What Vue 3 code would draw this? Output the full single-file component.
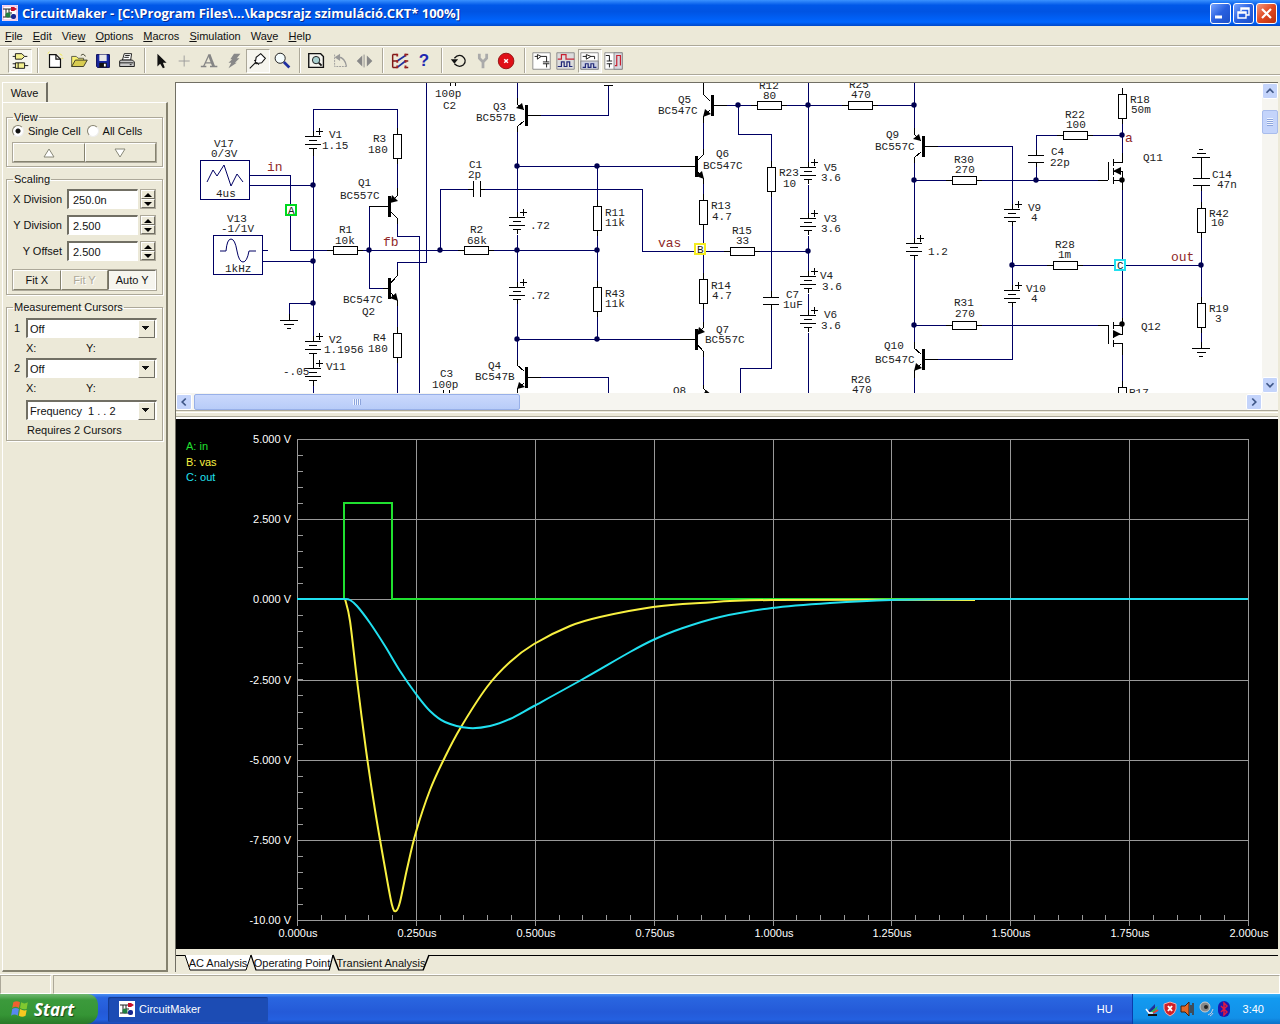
<script setup>
import { ref } from 'vue'

const menus = ['File', 'Edit', 'View', 'Options', 'Macros', 'Simulation', 'Wave', 'Help']
const hot = { File: 0, Edit: 0, View: 3, Options: 0, Macros: 0, Simulation: 0, Wave: 2, Help: 0 }

const view = ref('single')
const scaling = ref([
  { id: 'xdiv', label: 'X Division', value: '250.0n' },
  { id: 'ydiv', label: 'Y Division', value: '2.500' },
  { id: 'yoff', label: 'Y Offset', value: '2.500' },
])

/* schematic: symbols are placed on the drawing sheet */
const wires = [
  'M313 131V109H397V134', 'M313 152V336', 'M313 358V363', 'M313 385V395', 'M249 175H290V250H333', 'M249 185H313',
  'M262 250H268', 'M262 261H313', 'M313 303H289V315', 'M397 163V190', 'M369 206V288H383M369 206H383',
  'M397 223V236H419V395', 'M397 271V262H426V80', 'M397 305V328', 'M397 362V395', 'M357 250H464M488 250H597',
  'M440 250V189H468M485 189H642V251H730', 'M517 80V98M517 132V212M517 235V282M517 304V360', 'M540 115H608V86',
  'M540 377H608V395', 'M597 166V201M597 235V282M597 316V339', 'M517 166H680M517 339H680',
  'M703 122V150M703 183V195M703 229V274M703 308V323M703 356V386', 'M726 105H752M786 105H843M877 105H914',
  'M738 105V134H771V162M771 196V292M771 309V368H740V395', 'M808 80V162M808 185V213M808 236V271M808 294V310M808 333V395',
  'M759 251H808', 'M914 80V128M914 163V238M914 260V342M914 378V395', 'M938 146H1012V204', 'M938 359H1012V307',
  'M1012 226V285', 'M914 180H947M981 180H1098M914 325H947M981 325H1098', 'M1012 265H1048M1082 265H1201',
  'M1036 180V166M1036 150V135H1058M1092 135H1122', 'M1122 123V153M1122 190V318M1122 354V382', 'M1201 237V298M1201 190V203M1201 162V173M1201 332V343',
]
const leads = [
  'M313 131V136M313 149V156M313 336V341M313 353V368M313 380V386', 'M397 188V196L390 203M390 211L397 218V224M369 206H389',
  'M397 270V276L390 284M390 292L397 300V306M383 288H389', 'M517 98V104L524 110M524 121L517 127V132M527 115H541',
  'M517 360V365L524 371M524 383L517 389V395M527 377H541', 'M703 80V94L710 101M710 110L703 117V123M713 105H727',
  'M703 149V155L697 161M697 171L703 178V184M680 166H696', 'M703 322V328L697 335M697 344L703 351V357M680 339H696',
  'M914 128V134L921 141M921 152L914 158V163M924 146H938', 'M914 342V348L921 354M921 364L914 371V378M924 359H938',
  'M703 385V388L708 393', 'M468 189H473M480 189H485M473 181V197M480 181V197', 'M1028 155H1044M1028 162H1044M1036 150V155M1036 162V167',
  'M763 297H779M763 304H779M771 291V297M771 304V310', 'M1193 178H1210M1193 185H1210M1201 157V178M1201 185V191',
  'M1192 157H1210M1197 153H1206M1199 149H1203', 'M280 320H298M284 324H294M287 328H291M289 314V320',
  'M1192 348H1210M1197 352H1206M1199 356H1203M1201 342V348', 'M604 85H613', 'M450 80V86M455 80V86', 'M443 390V395M449 390V395',
  'M1108 162V180M1098 180H1108M1113 159V166M1113 168V175M1113 177V184M1113 162H1122V153M1113 171H1122V190M1113 180H1122',
  'M1108 325V344M1098 325H1108M1113 322V329M1113 331V338M1113 340V347M1113 325H1122M1122 318V334H1113M1113 343H1122V355',
]
const bars = [[388, 196], [388, 278], [525, 105], [525, 367], [711, 95], [695, 156], [695, 329], [922, 136], [922, 349]]
const arrows = [
  'M390 203L392 195L398 201Z', 'M398 301L390 298L396 293Z', 'M524 110L516 108L522 103Z', 'M517 389L519 382L525 387Z',
  'M703 117L705 109L711 114Z', 'M704 179L696 176L702 171Z', 'M697 335L699 327L705 332Z', 'M921 141L913 139L919 134Z',
  'M914 371L916 363L922 368Z', 'M1113 171L1121 167V175Z', 'M1121 334L1113 330V338Z', 'M712 395H703L706 390Z',
]
const vRes = [[397, 134], [397, 333], [597, 206], [597, 287], [703, 200], [703, 279], [771, 167], [1122, 94], [1201, 208], [1201, 303], [1122, 387]]
const hRes = [[333, 250], [464, 250], [757, 105], [848, 105], [730, 251], [952, 180], [952, 325], [1063, 135], [1053, 265]]
const cells = [[313, 136], [313, 341], [313, 368], [517, 217], [517, 287], [808, 167], [808, 218], [808, 276], [808, 315], [914, 243], [1012, 209], [1012, 290]]
const dots = [
  [313, 185], [313, 261], [313, 303], [369, 250], [440, 250], [517, 166], [597, 166], [517, 250], [597, 250], [517, 339], [597, 339],
  [738, 105], [808, 105], [914, 105], [808, 251], [914, 180], [914, 325], [1012, 265], [1036, 180], [1122, 135], [1201, 265],
]
const blackDots = [[1122, 180], [1122, 324]]
const labels = [
  [214, 147, 'V17'], [211, 157, '0/3V'], [216, 197, '4us'], [227, 222, 'V13'], [221, 232, '-1/1V'], [225, 272, '1kHz'],
  [329, 138, 'V1'], [322, 149, '1.15'], [373, 142, 'R3'], [368, 153, '180'], [358, 186, 'Q1'], [340, 199, 'BC557C'],
  [339, 233, 'R1'], [335, 244, '10k'], [343, 303, 'BC547C'], [362, 315, 'Q2'], [373, 341, 'R4'], [368, 352, '180'],
  [329, 343, 'V2'], [324, 353, '1.1956'], [326, 370, 'V11'], [283, 375, '-.05'],
  [435, 97, '100p'], [443, 109, 'C2'], [440, 377, 'C3'], [432, 388, '100p'], [493, 110, 'Q3'], [476, 121, 'BC557B'],
  [469, 168, 'C1'], [468, 178, '2p'], [470, 233, 'R2'], [467, 244, '68k'], [605, 216, 'R11'], [605, 226, '11k'],
  [530, 229, '.72'], [530, 299, '.72'], [605, 297, 'R43'], [605, 307, '11k'], [488, 369, 'Q4'], [475, 380, 'BC547B'],
  [678, 103, 'Q5'], [658, 114, 'BC547C'], [716, 157, 'Q6'], [703, 169, 'BC547C'], [711, 209, 'R13'], [712, 220, '4.7'],
  [732, 234, 'R15'], [736, 244, '33'], [711, 289, 'R14'], [712, 299, '4.7'], [716, 333, 'Q7'], [705, 343, 'BC557C'],
  [673, 394, 'Q8'], [759, 89, 'R12'], [763, 99, '80'], [779, 176, 'R23'], [783, 187, '10'], [786, 298, 'C7'], [783, 308, '1uF'],
  [824, 171, 'V5'], [821, 181, '3.6'], [824, 222, 'V3'], [821, 232, '3.6'], [820, 279, 'V4'], [822, 290, '3.6'],
  [824, 318, 'V6'], [821, 329, '3.6'], [849, 88, 'R25'], [851, 98, '470'], [886, 138, 'Q9'], [875, 150, 'BC557C'],
  [928, 255, '1.2'], [884, 349, 'Q10'], [875, 363, 'BC547C'], [851, 383, 'R26'], [852, 393, '470'],
  [954, 163, 'R30'], [955, 173, '270'], [954, 306, 'R31'], [955, 317, '270'], [1028, 211, 'V9'], [1031, 221, '4'],
  [1026, 292, 'V10'], [1031, 302, '4'], [1055, 248, 'R28'], [1058, 258, '1m'], [1051, 155, 'C4'], [1050, 166, '22p'],
  [1065, 118, 'R22'], [1066, 128, '100'], [1130, 103, 'R18'], [1131, 113, '50m'], [1143, 161, 'Q11'], [1141, 330, 'Q12'],
  [1212, 178, 'C14'], [1217, 188, '47n'], [1209, 217, 'R42'], [1211, 226, '10'], [1209, 312, 'R19'], [1215, 322, '3'],
  [1129, 396, 'R17'],
]
const nets = [[267, 171, 'in'], [383, 246, 'fb'], [658, 247, 'vas'], [1125, 142, 'a'], [1171, 261, 'out']]
const probes = [[286, 205, 'A', '#00d820'], [695, 244, 'B', '#f4ec20'], [1115, 260, 'C', '#20e0f0']]

/* transient plot */
const X0 = 297, X1 = 1248, Y0 = 439, Y1 = 920
const xt = i => Math.round(X0 + (i * (X1 - X0)) / 8)
const yt = i => Math.round(Y0 + (i * (Y1 - Y0)) / 6)
const xLabels = ['0.000us', '0.250us', '0.500us', '0.750us', '1.000us', '1.250us', '1.500us', '1.750us', '2.000us']
const yLabels = ['5.000 V', '2.500 V', '0.000 V', '-2.500 V', '-5.000 V', '-7.500 V', '-10.00 V']
const grid = [...xLabels.map((_, i) => `M${xt(i)} ${Y0}V${Y1 + 6}`), ...yLabels.map((_, i) => `M${X0} ${yt(i)}H${X1}`)].join('')
const ticks = [
  ...Array.from({ length: 40 }, (_, i) => `M${Math.round(X0 + i * 23.775)} ${Y1}v-5`),
  ...Array.from({ length: 30 }, (_, i) => `M${X0} ${Math.round(Y0 + i * 16.03)}h6`),
].join('')

function smooth(pts) {
  let d = `M${pts[0]}`
  for (let i = 0; i < pts.length - 1; i++) {
    const a = pts[Math.max(0, i - 1)], b = pts[i], c = pts[i + 1], e = pts[Math.min(pts.length - 1, i + 2)]
    d += `C${b[0] + (c[0] - a[0]) / 6} ${b[1] + (c[1] - a[1]) / 6} ${c[0] - (e[0] - b[0]) / 6} ${c[1] - (e[1] - b[1]) / 6} ${c}`
  }
  return d
}
const vas = smooth([[345, 599], [350, 621], [357, 680], [366, 750], [375, 810], [385, 868], [392, 905], [396, 911], [400, 902], [407, 869], [416, 832], [430, 790], [445, 757], [461, 727], [487, 687], [510, 662], [534, 644], [570, 626], [600, 617], [653, 607], [700, 603], [772, 600], [975, 600]])
const out = smooth([[345, 599], [350, 600], [357, 606], [370, 623], [385, 646], [400, 671], [416, 694], [430, 711], [445, 722], [469, 728], [490, 726], [510, 719], [534, 706], [583, 679], [630, 652], [653, 640], [680, 629], [720, 617], [772, 608], [830, 603], [891, 600], [975, 599], [1248, 599]])
</script>

<template>
  <div class="app">
    <header class="title">
      <svg class="logo" viewBox="0 0 16 16"><rect width="16" height="16" fill="#fff" /><rect x="1" y="1" width="14" height="14" fill="none" stroke="#e8a8d8" /><path d="M1 4h9M4 4v8M1 12h9M7 4v4h3" stroke="#222" fill="none" /><path d="M9 2h3l3 2-3 2H9z" fill="#c8102c" /><circle cx="6" cy="10" r="2.5" fill="#208040" /><rect x="9" y="9" width="5" height="5" rx="2" fill="#182890" /></svg>
      <h1>CircuitMaker - [C:\Program Files\...\kapcsrajz szimuláció.CKT* 100%]</h1>
      <button class="win" aria-label="Minimize"><svg viewBox="0 0 19 19"><path d="M4 13h7" stroke="#fff" stroke-width="3" /></svg></button>
      <button class="win" aria-label="Restore"><svg viewBox="0 0 19 19"><path d="M7 7V4h8v7h-3M7 5h8M4 8h8v6H4zM4 9h8" stroke="#fff" stroke-width="1.4" fill="none" /></svg></button>
      <button class="win close" aria-label="Close"><svg viewBox="0 0 19 19"><path d="M5 5l9 9M14 5l-9 9" stroke="#fff" stroke-width="2.2" /></svg></button>
    </header>

    <nav class="menu">
      <a v-for="m in menus" :key="m" href="#">{{ m.slice(0, hot[m]) }}<u>{{ m[hot[m]] }}</u>{{ m.slice(hot[m] + 1) }}</a>
    </nav>

    <div class="toolbar">
      <button class="on" aria-label="Parts"><svg viewBox="0 0 24 24"><path d="M7 4h7l3 3-3 3H7zM7 14h10v6H7z" fill="#f4f090" stroke="#111" /><path d="M4 7h3M17 7h3M4 15h3M4 19h3M17 17h4M10 14v6" stroke="#111" /></svg></button>
      <i></i>
      <button aria-label="New"><svg viewBox="0 0 24 24"><path d="M6 5h7l5 5v9H6z" fill="#fff" stroke="#111" stroke-width="1.3" /><path d="M13 5v5h5" fill="none" stroke="#111" stroke-width="1.3" /><path d="M4 4l2-2M17 4l3 2M19 9h2" stroke="#f0e840" /></svg></button>
      <button aria-label="Open"><svg viewBox="0 0 24 24"><path d="M4 18V7h5l2 2h6v3" fill="#f8f070" stroke="#554" /><path d="M4 18l4-7h13l-4 7z" fill="#d8cc50" stroke="#332" /><path d="M14 6q3-3 5 1" fill="none" stroke="#332" /></svg></button>
      <button aria-label="Save"><svg viewBox="0 0 24 24"><path d="M5 5h14v14H6l-1-1z" fill="#1828a0" stroke="#000050" /><path d="M8 5h8v7H8z" fill="#e8e8e8" /><path d="M8 14h8v5H8z" fill="#111" /><path d="M13 15h2v3h-2z" fill="#fff" /></svg></button>
      <button aria-label="Print"><svg viewBox="0 0 24 24"><path d="M7 11l2-7h8l-1 7z" fill="#fff" stroke="#111" /><path d="M10 6h5M9 8h5" stroke="#111" /><path d="M5 11h13l2 2v5H4v-6z" fill="#c8c8c8" stroke="#111" /><path d="M4 14h15M15 16h2" stroke="#111" /></svg></button>
      <i></i>
      <button aria-label="Select"><svg viewBox="0 0 24 24"><path d="M7 4v14l3-3 3 5 2-1-2-5h4z" fill="#111" /></svg></button>
      <button aria-label="Wire"><svg viewBox="0 0 24 24"><path d="M10 6v12M4 12h12" stroke="#999" /></svg></button>
      <button aria-label="Text"><svg viewBox="0 0 24 24"><path d="M5 18l6-13" fill="none" stroke="#858585" stroke-width="1.4" /><path d="M11 5l5 13" stroke="#858585" stroke-width="3" /><path d="M7 14h7M2 18h6M12 18h8" stroke="#858585" stroke-width="1.4" /></svg></button>
      <button aria-label="Delete"><svg viewBox="0 0 24 24"><path d="M12 4h7l-4 5h3l-5 5h2l-9 6 3-6H6l4-4H8z" fill="#888" /></svg></button>
      <button class="on" aria-label="Probe"><svg viewBox="0 0 24 24"><path d="M3 20l6-6M9 14l1-6 5-4 5 5-4 5-6 1zM8 11l5 5" fill="#fff" stroke="#111" stroke-width="1.2" /></svg></button>
      <button aria-label="Zoom"><svg viewBox="0 0 24 24"><circle cx="10" cy="9" r="5.5" fill="#f4fcfc" stroke="#111" /><path d="M14 13l6 6" stroke="#2030a0" stroke-width="3" /></svg></button>
      <i></i>
      <button aria-label="Fit"><svg viewBox="0 0 24 24"><path d="M3 4h13l3 3v12H3z" fill="#f4f4ee" stroke="#111" stroke-width="1.5" /><circle cx="11" cy="11" r="4" fill="#a8d0d0" stroke="#111" /><path d="M14 14l3 3" stroke="#111" stroke-width="2" /></svg></button>
      <button aria-label="Rotate"><svg viewBox="0 0 24 24"><path d="M5 5v13h14" fill="none" stroke="#999" stroke-dasharray="2 1" /><path d="M8 8q8-1 10 10" fill="none" stroke="#999" stroke-width="1.4" /><path d="M5 8l6-4v8z" fill="#999" /></svg></button>
      <button aria-label="Mirror"><svg viewBox="0 0 24 24"><path d="M9 6v12l-6-6zM14 6v12l6-6z" fill="#888" /><path d="M11 5v14" stroke="#888" /></svg></button>
      <i></i>
      <button aria-label="Switches"><svg viewBox="0 0 24 24"><path d="M4 5v14M4 5h5M4 12h5M4 19h5M17 5h4M17 12h4M17 19h4" stroke="#801818" stroke-width="1.6" /><path d="M9 12l9-6M9 19l9-7" stroke="#2030a0" stroke-width="1.8" /><path d="M9 4v3M9 11v3M9 17v3M18 4v3M18 11v3M18 17v3" stroke="#a02020" stroke-width="2" /></svg></button>
      <button class="help" aria-label="Help">?</button>
      <i></i>
      <button aria-label="Reset"><svg viewBox="0 0 24 24"><path d="M7 9q4-5 9-2 5 4 1 9-5 4-10-1" fill="none" stroke="#111" stroke-width="1.4" /><path d="M3 10h8l-4 5z" fill="#111" /></svg></button>
      <button aria-label="Step"><svg viewBox="0 0 24 24"><path d="M8 4v5l3 3h2l3-3V4M12 11v9" fill="none" stroke="#aaa" stroke-width="3" /></svg></button>
      <button aria-label="Stop"><svg viewBox="0 0 24 24"><circle cx="11" cy="12" r="8.5" fill="#e01018" stroke="#901010" /><path d="M9 10l4 4M13 10l-4 4" stroke="#fff" stroke-width="1.6" /></svg></button>
      <i></i>
      <button aria-label="Schematic"><svg viewBox="0 0 24 24"><path d="M2 3h19v18H2z" fill="#fff" stroke="#888" /><path d="M4 7h3M7 5v5l4-3zM11 7h6v6M13 13h7M13 15h7M17 15v4" fill="none" stroke="#111" /></svg></button>
      <button aria-label="Waveforms"><svg viewBox="0 0 24 24"><path d="M2 3h19v18H2z" fill="#dcdcdc" stroke="#888" /><path d="M3 10h4V5h5v5h9" fill="none" stroke="#c82030" stroke-width="1.3" /><path d="M3 18h4v-5h3v5h3v-5h3v5h3" fill="none" stroke="#202878" stroke-width="1.3" /></svg></button>
      <button class="on" aria-label="Split horizontal"><svg viewBox="0 0 24 24"><path d="M2 3h19v18H2z" fill="#fff" stroke="#888" /><path d="M2 12h19v9H2z" fill="#ccd0e0" stroke="#888" /><path d="M4 7h4M8 5v5l5-3zM13 7h4v3" fill="none" stroke="#111" /><path d="M4 19h3v-4h3v4h3v-4h3v4h3" fill="none" stroke="#202878" stroke-width="1.3" /></svg></button>
      <button aria-label="Split vertical"><svg viewBox="0 0 24 24"><path d="M2 3h19v18H2z" fill="#fff" stroke="#888" /><path d="M12 3h9v18h-9z" fill="#d8d8e0" stroke="#888" /><path d="M3 6h4v6M4 12h6M4 15h6M7 15v4" fill="none" stroke="#111" /><path d="M13 17h2V6h4v11" fill="none" stroke="#c82030" stroke-width="1.3" /></svg></button>
    </div>

    <main class="main">
      <aside class="side">
        <div class="tabrow"><button class="tab">Wave</button></div>
        <div class="page">
          <fieldset class="view">
            <legend>View</legend>
            <div class="radios">
              <label><input v-model="view" type="radio" name="cells" value="single" />Single Cell</label>
              <label><input v-model="view" type="radio" name="cells" value="all" />All Cells</label>
            </div>
            <div class="pair">
              <button class="btn" aria-label="Previous cell"><svg width="12" height="10"><path d="M1 9h10L6 1z" fill="#fff" stroke="#888878" /></svg></button>
              <button class="btn" aria-label="Next cell"><svg width="12" height="10"><path d="M1 1h10L6 9z" fill="#fff" stroke="#888878" /></svg></button>
            </div>
          </fieldset>
          <fieldset class="scale">
            <legend>Scaling</legend>
            <div v-for="s in scaling" :key="s.id" class="field">
              <label :for="s.id">{{ s.label }}</label>
              <input :id="s.id" v-model="s.value" type="text" />
              <span class="spin">
                <button aria-label="Increase"><svg width="8" height="4"><path d="M0 4h8L4 0z" /></svg></button>
                <button aria-label="Decrease"><svg width="8" height="4"><path d="M0 0h8L4 4z" /></svg></button>
              </span>
            </div>
            <div class="fits">
              <button class="btn">Fit X</button><button class="btn" disabled>Fit Y</button><button class="btn down">Auto Y</button>
            </div>
          </fieldset>
          <fieldset class="cursors">
            <legend>Measurement Cursors</legend>
            <template v-for="n in 2" :key="n">
              <div class="cur"><label :for="'cur' + n">{{ n }}</label><span class="sel"><select :id="'cur' + n"><option>Off</option></select></span></div>
              <div class="xy"><span>X:</span><span>Y:</span></div>
            </template>
            <div class="cur last"><span class="sel"><select aria-label="Measurement"><option>Frequency&nbsp; 1 . . 2</option></select></span></div>
            <p>Requires 2 Cursors</p>
          </fieldset>
        </div>
      </aside>

      <section class="work">
        <div class="sheet">
          <div class="canvas">
            <svg width="1086" height="310" viewBox="176 83 1086 310">
              <g fill="none" stroke="#000064" shape-rendering="crispEdges">
                <path v-for="w in wires" :key="w" :d="w" />
                <rect x="200" y="160" width="49" height="39" /><rect x="213" y="235" width="49" height="39" />
              </g>
              <path d="M207 182L213 170 217 176 224 165 231 186 237 174 243 182M220 251h6q1-12 5-12t6 12q2 11 6 11t6-11h7" fill="none" stroke="#000064" />
              <g fill="none" stroke="#000" shape-rendering="crispEdges"><path v-for="l in leads" :key="l" :d="l" /></g>
              <path v-for="a in arrows" :key="a" :d="a" />
              <rect v-for="b in bars" :key="b" :x="b[0]" :y="b[1]" width="3" height="21" />
              <g fill="#fff" stroke="#000" shape-rendering="crispEdges">
                <g v-for="r in vRes" :key="r"><path :d="`M${r[0]} ${r[1] - 6}v36`" /><rect :x="r[0] - 4" :y="r[1]" width="8" height="24" /></g>
                <g v-for="r in hRes" :key="r"><path :d="`M${r[0] - 6} ${r[1]}h36`" /><rect :x="r[0]" :y="r[1] - 4" width="24" height="8" /></g>
                <path v-for="c in cells" :key="c" fill="none" :d="`M${c[0] - 8} ${c[1]}h16m-12 4h8m-12 4h16m-12 4h8M${c[0]} ${c[1]}v-5m0 17v5m3 -22h7m-3.5 -3v7`" />
              </g>
              <circle v-for="d in dots" :key="d" :cx="d[0]" :cy="d[1]" r="2.7" fill="#000050" />
              <circle v-for="d in blackDots" :key="d" :cx="d[0]" :cy="d[1]" r="2.7" />
              <text v-for="t in labels" :key="t" :x="t[0]" :y="t[1]">{{ t[2] }}</text>
              <text v-for="t in nets" :key="t" class="net" :x="t[0]" :y="t[1]">{{ t[2] }}</text>
              <g v-for="p in probes" :key="p"><rect :x="p[0]" :y="p[1]" width="10" height="10" fill="#fff" :stroke="p[3]" stroke-width="2" /><text :x="p[0] + 2" :y="p[1] + 9">{{ p[2] }}</text></g>
            </svg>
          </div>
          <div class="vbar">
            <button aria-label="Scroll up"><svg viewBox="0 0 16 16"><path d="M4 10l4-4 4 4" /></svg></button>
            <span class="vthumb"></span>
            <button aria-label="Scroll down"><svg viewBox="0 0 16 16"><path d="M4 6l4 4 4-4" /></svg></button>
          </div>
        </div>
        <div class="hbar">
          <button aria-label="Scroll left"><svg viewBox="0 0 16 16"><path d="M10 4L6 8l4 4" /></svg></button>
          <span class="hthumb"></span>
          <button aria-label="Scroll right"><svg viewBox="0 0 16 16"><path d="M6 4l4 4-4 4" /></svg></button>
        </div>
        <div class="split"></div>
        <div class="plot">
          <svg viewBox="176 419 1102 530">
            <path :d="grid" class="grid" /><path :d="ticks" class="grid" />
            <path d="M297 599H344V503H392V599H975" fill="none" stroke="#20e030" stroke-width="2" />
            <path :d="vas" fill="none" stroke="#f8f040" stroke-width="2" />
            <path d="M297 599H345" stroke="#20e0f0" stroke-width="2" />
            <path :d="out" fill="none" stroke="#20e0f0" stroke-width="2" />
            <text v-for="(t, i) in yLabels" :key="t" x="291" :y="yt(i) + 4" text-anchor="end">{{ t }}</text>
            <text v-for="(t, i) in xLabels" :key="t" :x="xt(i) + 1" y="937" text-anchor="middle">{{ t }}</text>
            <text x="186" y="450" class="a">A: in</text><text x="186" y="466" class="b">B: vas</text><text x="186" y="481" class="c">C: out</text>
          </svg>
        </div>
        <div class="sheets">
          <button><svg viewBox="0 0 66 16" preserveAspectRatio="none"><path d="M0 0l5 15h56l5-15" fill="#fff" stroke="#000" /></svg><span>AC Analysis</span></button>
          <button class="op"><svg viewBox="0 0 66 16" preserveAspectRatio="none"><path d="M0 0l4 15h59l3-15" fill="#fff" stroke="#000" /></svg><span>Operating Point</span></button>
          <button class="cur-tab"><svg viewBox="0 0 66 16" preserveAspectRatio="none"><path d="M0 0l4 15h58l4-15" fill="#ece9d8" stroke="#000" /></svg><span>Transient Analysis</span></button>
          <b></b>
        </div>
      </section>
    </main>

    <div class="status"><span></span><span></span></div>

    <footer class="task">
      <button class="start">
        <svg viewBox="0 0 18 18"><path d="M3 3q3-2 6 0L8 8q-3-2-6 0z" fill="#f06030" /><path d="M10 3q3 2 6 0l-1 6q-3 1-6-1z" fill="#80c830" /><path d="M2 9q3-2 6 0l-1 6q-3-2-6 0z" fill="#5888f0" /><path d="M9 9q3 2 6 1l-1 5q-3 2-6 0z" fill="#f8c820" /></svg>Start
      </button>
      <button class="app-btn">
        <svg class="logo" viewBox="0 0 16 16"><rect width="16" height="16" fill="#fff" /><path d="M1 4h9M4 4v8M1 12h9M7 4v4h3" stroke="#222" fill="none" /><path d="M9 2h3l3 2-3 2H9z" fill="#c8102c" /><circle cx="6" cy="10" r="2.5" fill="#208040" /><rect x="9" y="9" width="5" height="5" rx="2" fill="#182890" /></svg>CircuitMaker
      </button>
      <span class="lang">HU</span>
      <div class="tray">
        <svg viewBox="0 0 16 16"><path d="M4 14h9" stroke="#111" stroke-width="2" /><path d="M3 11l8-8v4l-5 5z" fill="#203098" /><path d="M5 12l9-7-3 6z" fill="#30b850" /><path d="M2 8l3 4h4" fill="none" stroke="#fff" stroke-width="1.5" /><path d="M9 12l5-3" stroke="#e04040" stroke-width="2" /></svg>
        <svg viewBox="0 0 16 16"><path d="M8 1l6 2v5q-1 5-6 7-5-2-6-7V3z" fill="#d02028" stroke="#f0b0b0" /><path d="M6 5l4 5M10 5l-4 5" stroke="#fff" stroke-width="2" /></svg>
        <svg viewBox="0 0 16 16"><path d="M1 5h4l4-4v14l-4-4H1z" fill="#e06828" stroke="#402010" /><path d="M11 4v8M13 2v12" stroke="#503020" stroke-width="1.4" /></svg>
        <svg viewBox="0 0 16 16"><circle cx="7" cy="6" r="5" fill="#888" stroke="#ccc" /><circle cx="8" cy="6" r="2" fill="#222" /><path d="M10 14q4-1 5-6M12 15q2-1 3-3" fill="none" stroke="#ccd" /></svg>
        <svg viewBox="0 0 16 16"><rect x="2" width="12" height="16" rx="6" fill="#1818b0" /><path d="M5 5l6 6-3 3V2l3 3-6 6" fill="none" stroke="#e01840" stroke-width="1.5" /></svg>
        <time>3:40</time>
      </div>
    </footer>
  </div>
</template>

<style>
body { background: #ece9d8; }
</style>

<style scoped>
.app { display: flex; flex-direction: column; min-height: 100vh; box-sizing: border-box; background: #ece9d8; font: 11px "Liberation Sans", Arial, sans-serif; color: #111; }
.app * { box-sizing: border-box; }
button, input, select { font: inherit; color: inherit; margin: 0; padding: 0; border-radius: 0; }
button { border: 0; background: none; }
a { color: inherit; text-decoration: none; }
svg { display: block; }

.title { display: flex; align-items: center; height: 26px; padding: 0 3px 0 2px; gap: 2px; background: linear-gradient(#3a92ff, #0058e8 20%, #0054e3 45%, #0066ff 85%, #0048c8); }
.logo { width: 16px; height: 16px; flex: none; }
.title h1 { flex: 1; margin: 0 0 0 2px; font: bold 13px "Open Sans", "Noto Sans", sans-serif; color: #fff; text-shadow: 1px 1px #0a2a90; white-space: nowrap; overflow: hidden; }
.win { width: 21px; height: 21px; border: 1px solid #fff; border-radius: 3px; background: linear-gradient(135deg, #78a4ff, #2860e0 50%, #1c50c8); }
.close { background: linear-gradient(135deg, #f09880, #e04820 50%, #b83010); }

.menu { display: flex; gap: 10px; height: 20px; padding: 0 5px; align-items: center; border-bottom: 1px solid #aca899; }
.toolbar { display: flex; align-items: center; height: 29px; padding-left: 8px; border-top: 1px solid #fff; border-bottom: 1px solid #aca899; }
.toolbar button { width: 24px; height: 24px; flex: none; }
.toolbar svg { width: 22px; height: 22px; margin: 0 auto; }
.toolbar i { width: 11px; height: 25px; flex: none; background: linear-gradient(90deg, transparent 5px, #aca899 5px 6px, #fff 6px 7px, transparent 7px); }
.toolbar .on { background: #f6f5ee; border: 1px solid #aca899; border-right-color: #fff; border-bottom-color: #fff; }
.toolbar .help { font: bold 17px "Liberation Sans", sans-serif; color: #2028b0; }

.main { display: flex; flex: 1; border-top: 1px solid #fff; padding-top: 6px; }
.side { display: flex; flex-direction: column; width: 169px; flex: none; padding: 0 1px 2px 2px; }
.tabrow { height: 20px; }
.tab { height: 20px; width: 46px; border-top: 1px solid #fff; border-right: 2px solid #716f64; text-align: center; }
.page { flex: 1; padding: 8px 3px 0 3px; border: 1px solid #fff; border-right: 2px solid #85826f; border-bottom: 2px solid #85826f; }
.tab, .page { border-left: 1px solid #fff; }
fieldset { margin: 0 0 6px; padding: 0 5px; border: 1px solid #aca899; box-shadow: inset 1px 1px #fff, 1px 1px #fff; min-width: 0; }
legend { padding: 0 1px; margin-left: 1px; height: 12px; line-height: 12px; }
.view { height: 56px; }
.scale { height: 122px; }
.cursors { height: 140px; }
.radios { display: flex; gap: 6px; height: 18px; align-items: center; margin: -1px 0 2px; }
.radios label { display: flex; align-items: center; gap: 4px; white-space: nowrap; }
.radios input { appearance: none; width: 12px; height: 12px; border-radius: 50%; background: #fff; border: 1px solid #85826f; border-right-color: #eee; border-bottom-color: #eee; }
.radios input:checked { background: radial-gradient(#111 2px, #fff 3px); }
.btn { display: flex; flex: 1; align-items: center; justify-content: center; background: #ece9d8; border: 1px solid #fff; border-right-color: #85826f; border-bottom-color: #85826f; white-space: nowrap; }
.btn:disabled { color: #aca899; text-shadow: 1px 1px #fff; }
.btn.down { background: #f6f5ee; border-color: #716f64 #fff #fff #716f64; box-shadow: none; }
.pair { display: flex; height: 21px; border: 1px solid #aca899; }
.field { display: flex; align-items: center; height: 20px; margin: 0 0 6px; }
.scale legend + .field { margin-top: 4px; }
.field label { width: 50px; text-align: right; margin-right: 5px; white-space: nowrap; }
.field input { width: 71px; height: 20px; padding-left: 4px; background: #fff; border: 2px solid #716f64; border-right: 1px solid #fff; border-bottom: 1px solid #fff; outline: 0; margin-right: 2px; }
.spin { display: flex; flex-direction: column; width: 16px; height: 20px; border: 1px solid #aca899; }
.spin button { flex: 1; display: flex; align-items: center; justify-content: center; border: 1px solid #fff; border-right-color: #716f64; border-bottom-color: #716f64; }
.fits { display: flex; height: 22px; margin-top: 8px; border: 1px solid #aca899; }
.cur { display: flex; align-items: center; height: 20px; }
.cursors legend + .cur { margin-top: 5px; }
.cur label { width: 14px; padding-left: 2px; }
.sel { flex: 1; position: relative; }
.sel::after { content: ""; position: absolute; right: 2px; top: 2px; width: 15px; height: 16px; pointer-events: none; border: 1px solid #fff; border-right-color: #716f64; border-bottom-color: #716f64; background: linear-gradient(#111, #111) 3px 5px / 7px 1px no-repeat, linear-gradient(#111, #111) 4px 6px / 5px 1px no-repeat, linear-gradient(#111, #111) 5px 7px / 3px 1px no-repeat, linear-gradient(#111, #111) 6px 8px / 1px 1px no-repeat, #ece9d8; }
select { appearance: none; width: 100%; height: 20px; padding-left: 2px; background: #fff; border: 2px solid #716f64; border-right: 1px solid #fff; border-bottom: 1px solid #fff; outline: 0; }
.xy { display: flex; height: 20px; align-items: center; padding-left: 14px; }
.xy span { width: 60px; }
.last { padding-left: 14px; margin-top: 2px; }
.cursors p { margin: 4px 0 0 15px; }

.work { display: flex; flex-direction: column; flex: 1; min-width: 0; margin: 0 2px 2px 6px; border-top: 1px solid #716f64; border-left: 1px solid #716f64; }
.sheet { display: flex; height: 310px; background: #fff; }
.canvas { flex: 1; min-width: 0; overflow: hidden; }
.canvas text { font: 11px "Liberation Mono", "Courier New", monospace; fill: #222; }
.canvas .net { font-size: 13px; fill: #902828; }
.vbar { display: flex; flex-direction: column; width: 16px; background: #f6f5f0; }
.vbar button, .hbar button { width: 16px; height: 16px; border: 1px solid #fff; border-radius: 2px; background: #c4d4fb; flex: none; }
.vbar path, .hbar path { fill: none; stroke: #405888; stroke-width: 2; }
.vthumb { height: 24px; margin: 11px 0 auto; border: 1px solid #a8bcec; border-radius: 2px; background: repeating-linear-gradient(#eef4ff 0 1px, #8ca4dc 1px 2px) center / 6px 8px no-repeat, #c4d4fb; }
.hbar { display: flex; align-items: center; height: 17px; padding-right: 16px; background: #f6f5f0; }
.hthumb { width: 30%; height: 16px; margin: 0 auto 0 2px; border: 1px solid #98b0e8; border-radius: 2px; background: repeating-linear-gradient(90deg, #eef4ff 0 1px, #8ca4dc 1px 2px) center / 8px 6px no-repeat, linear-gradient(#cad8fc, #b8ccf8); }
.split { height: 9px; border-top: 1px solid #aca899; background: linear-gradient(#ece9d8 1px, #fff 1px 2px, #ece9d8 2px 5px, #aca899 5px 6px, #fff 6px); }
.plot { flex: 1; min-height: 0; background: #000; }
.plot svg { width: 100%; }
.plot text { font: 11px "Liberation Sans", Arial, sans-serif; fill: #fff; }
.grid { fill: none; stroke: #999; shape-rendering: crispEdges; }
.plot .a { fill: #20e030; } .plot .b { fill: #f8f040; } .plot .c { fill: #20e0f0; }
.sheets { display: flex; flex: none; height: 23px; padding: 6px 0 0 9px; background: linear-gradient(#000, #000) 0 6px / 9px 1px no-repeat; }
.sheets button { position: relative; width: 66px; height: 16px; }
.sheets .op { width: 82px; }
.sheets .cur-tab { width: 96px; }
.sheets b { flex: 1; height: 1px; background: #000; }
.sheets svg { position: absolute; inset: 0; width: 100%; height: 100%; overflow: visible; }
.sheets span { position: relative; white-space: nowrap; }

.status { display: flex; gap: 2px; height: 20px; border-top: 1px solid #fff; }
.status span { border: 1px solid #aca899; border-right-color: #fff; border-bottom-color: #fff; }
.status span:first-child { width: 51px; }
.status span:last-child { flex: 1; }

.task { display: flex; align-items: center; height: 30px; color: #fff; background: linear-gradient(#4a90f4, #2a66e0 12%, #245ad8 60%, #2460e0 85%, #1a48b0); }
.start { display: flex; align-items: center; gap: 4px; width: 98px; height: 30px; padding-left: 10px; border-radius: 0 10px 12px 0; font: italic bold 17px "Open Sans", "Liberation Sans", sans-serif; color: #fff; text-shadow: 1px 1px 1px #184818; background: linear-gradient(#70b870, #3c9a3c 20%, #359535 70%, #287828); }
.start svg { width: 20px; height: 20px; }
.app-btn { display: flex; align-items: center; gap: 4px; width: 160px; height: 25px; margin-left: 10px; padding-left: 11px; border-radius: 2px; background: #1c4cb4; box-shadow: inset 1px 1px 1px #143a90; }
.lang { margin-left: auto; margin-right: 19px; }
.tray { display: flex; align-items: center; gap: 2px; height: 30px; padding: 0 16px 0 11px; border-left: 1px solid #0a3cac; background: linear-gradient(#38b0f8, #129af0 15%, #1290e8 80%, #0c70c8); }
.tray svg { width: 16px; height: 16px; }
.tray time { margin-left: 9px; }
</style>
